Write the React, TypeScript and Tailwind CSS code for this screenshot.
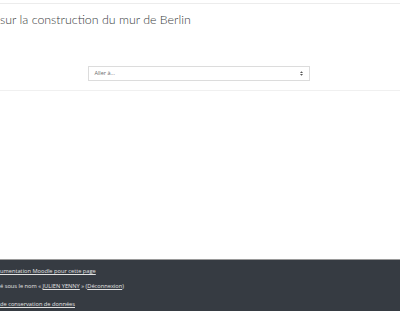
export default function App() {
  return (
    <div className="w-[400px] h-[311px] overflow-hidden bg-white flex flex-col" style={{ fontFamily: "'Open Sans', 'Liberation Sans', sans-serif" }}>
      {/* top bar edge */}
      <div className="h-[3px] shrink-0 border-b border-[#ececec] box-content" />

      {/* page title */}
      <div className="pt-[7px] h-[30px] shrink-0">
        <h2 className="text-[12.4px] leading-[18px] font-light text-[#3a3d40] whitespace-nowrap" style={{ fontFamily: "Lato, 'Liberation Sans', sans-serif" }}>
          sur la construction du mur de Berlin
        </h2>
      </div>

      {/* jump to select */}
      <div className="pt-[32px] flex justify-center pr-[3px]">
        <div className="w-[222px] h-[15px] border border-[#dcdcdc] flex items-center justify-between pl-[6px] pr-[6px]">
          <span className="text-[5.5px] text-[#6a6a6a]">Aller à...</span>
          <svg width="3" height="5" viewBox="0 0 4 6" className="text-[#555]">
            <path d="M0 2.4 L2 0 L4 2.4 Z M0 3.6 L2 6 L4 3.6 Z" fill="currentColor" />
          </svg>
        </div>
      </div>

      <div className="mt-[9px] border-b border-[#f0f0f0]" />

      <div className="flex-1" />

      {/* footer */}
      <footer className="h-[52px] shrink-0 bg-[#363b42] border-t border-[#9a9a9a] text-[#e3e3e3] text-[5.7px] leading-[8px] overflow-hidden">
        <div className="pt-[7px] flex flex-col items-start">
          <a className="underline whitespace-nowrap">umentation Moodle pour cette page</a>
          <p className="mt-[7px] whitespace-nowrap">
            é sous le nom « <a className="underline">JULIEN YENNY</a> » (<a className="underline">Déconnexion</a>)
          </p>
          <a className="mt-[10px] underline whitespace-nowrap">de conservation de données</a>
        </div>
      </footer>
    </div>
  );
}
